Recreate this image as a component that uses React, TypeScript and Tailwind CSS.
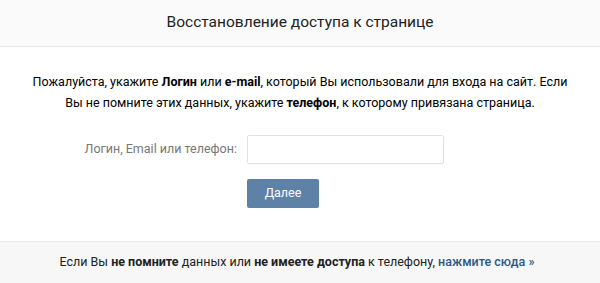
export default function App() {
  return (
    <div className="w-[600px] h-[283px] bg-white flex flex-col font-['Roboto',sans-serif] text-[#222]">
      <div className="h-[47px] bg-[#fafafb] border-b border-[#e7e8ec] flex items-center justify-center">
        <h1 className="text-[15.5px] text-[#222]">Восстановление доступа к странице</h1>
      </div>

      <div className="flex-1 flex flex-col items-center pt-[24px]">
        <p className="text-center text-[12.5px] leading-[21px] text-[#000] w-[540px]">
          Пожалуйста, укажите <b className="font-bold">Логин</b> или <b className="font-bold">e-mail</b>, который Вы
          использовали для входа на сайт. Если Вы не помните этих данных, укажите{" "}
          <b className="font-bold">телефон</b>, к которому привязана страница.
        </p>

        <div className="mt-[22px] flex items-center w-full">
          <label className="w-[247px] pr-[10px] text-right text-[12.5px] text-[#777]">
            Логин, Email или телефон:
          </label>
          <input className="w-[197px] h-[29px] border border-[#dfe1e5] rounded-[2px] bg-white" />
        </div>

        <div className="mt-[15px] flex w-full">
          <div className="w-[247px]" />
          <button className="w-[72px] h-[29px] rounded-[2px] bg-[#5e81a8] text-white text-[12.5px]">
            Далее
          </button>
        </div>
      </div>

      <div className="h-[42px] bg-[#f7f7f7] border-t border-[#e7e8ec] flex items-center justify-center text-[12.5px] text-[#222] pr-[6px]">
        <span>
          Если Вы <b className="font-bold">не помните</b> данных или <b className="font-bold">не имеете доступа</b> к
          телефону, <span className="text-[#2a5885] font-medium">нажмите сюда »</span>
        </span>
      </div>
    </div>
  );
}
